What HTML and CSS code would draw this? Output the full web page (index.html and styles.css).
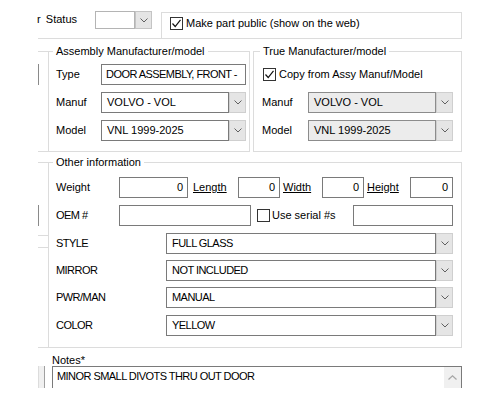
FILE: index.html
```html
<!DOCTYPE html>
<html>
<head>
<meta charset="utf-8">
<link rel="stylesheet" href="styles.css">
</head>
<body>
<div class="form">
  <div class="toprow">
    <div class="status">
      <span class="statuslabel"><span class="clip">er Status</span></span>
      <div class="combo small">
        <div class="field"></div>
        <div class="btn"><svg width="8" height="5" viewBox="0 0 8 5"><path d="M0.5 0.5 L4 4 L7.5 0.5" fill="none" stroke="#606060" stroke-width="1"/></svg></div>
      </div>
    </div>
    <div class="publicbox">
      <span class="check"><svg width="11" height="11" viewBox="0 0 11 11"><path d="M1.5 5.5 L4.2 8.5 L9.5 1.8" fill="none" stroke="#111" stroke-width="1.2"/></svg></span>
      <span class="checktext">Make part public (show on the web)</span>
    </div>
  </div>

  <div class="mfrrow">
    <div class="gutter g1"><div class="vl"></div></div>
    <div class="group asm">
      <div class="legend">Assembly Manufacturer/model</div>
      <div class="frow">
        <span class="lbl">Type</span>
        <div class="textbox w145 caps">DOOR ASSEMBLY, FRONT -</div>
      </div>
      <div class="frow">
        <span class="lbl">Manuf</span>
        <div class="combo w145">
          <div class="field">VOLVO - VOL</div>
          <div class="btn"><svg width="8" height="5" viewBox="0 0 8 5"><path d="M0.5 0.5 L4 4 L7.5 0.5" fill="none" stroke="#606060" stroke-width="1"/></svg></div>
        </div>
      </div>
      <div class="frow">
        <span class="lbl">Model</span>
        <div class="combo w145">
          <div class="field">VNL 1999-2025</div>
          <div class="btn"><svg width="8" height="5" viewBox="0 0 8 5"><path d="M0.5 0.5 L4 4 L7.5 0.5" fill="none" stroke="#606060" stroke-width="1"/></svg></div>
        </div>
      </div>
    </div>
    <div class="group tru">
      <div class="legend">True Manufacturer/model</div>
      <div class="frow">
        <span class="check ml1"><svg width="11" height="11" viewBox="0 0 11 11"><path d="M1.5 5.5 L4.2 8.5 L9.5 1.8" fill="none" stroke="#111" stroke-width="1.2"/></svg></span>
        <span class="checktext">Copy from Assy Manuf/Model</span>
      </div>
      <div class="frow">
        <span class="lbl">Manuf</span>
        <div class="combo w145 disabled">
          <div class="field">VOLVO - VOL</div>
          <div class="btn"><svg width="8" height="5" viewBox="0 0 8 5"><path d="M0.5 0.5 L4 4 L7.5 0.5" fill="none" stroke="#606060" stroke-width="1"/></svg></div>
        </div>
      </div>
      <div class="frow">
        <span class="lbl">Model</span>
        <div class="combo w145 disabled">
          <div class="field">VNL 1999-2025</div>
          <div class="btn"><svg width="8" height="5" viewBox="0 0 8 5"><path d="M0.5 0.5 L4 4 L7.5 0.5" fill="none" stroke="#606060" stroke-width="1"/></svg></div>
        </div>
      </div>
    </div>
  </div>

  <div class="otherrow">
    <div class="gutter g2"><div class="vl"></div><div class="hl"></div></div>
    <div class="group other">
      <div class="legend">Other information</div>
      <div class="frow">
        <span class="lbl w63">Weight</span>
        <div class="textbox num w69">0</div>
        <span class="ulbl lenl">Length</span>
        <div class="textbox num w42">0</div>
        <span class="ulbl widl">Width</span>
        <div class="textbox num w42">0</div>
        <span class="ulbl hgtl">Height</span>
        <div class="textbox num w43">0</div>
      </div>
      <div class="frow">
        <span class="lbl w63 caps">OEM #</span>
        <div class="textbox w132"></div>
        <span class="check ml6"></span>
        <span class="sertext">Use serial #s</span>
        <div class="textbox w100"></div>
      </div>
      <div class="frow">
        <span class="lbl w110 caps">STYLE</span>
        <div class="combo w287">
          <div class="field caps">FULL GLASS</div>
          <div class="btn"><svg width="8" height="5" viewBox="0 0 8 5"><path d="M0.5 0.5 L4 4 L7.5 0.5" fill="none" stroke="#606060" stroke-width="1"/></svg></div>
        </div>
      </div>
      <div class="frow tight">
        <span class="lbl w110 caps">MIRROR</span>
        <div class="combo w287">
          <div class="field caps">NOT INCLUDED</div>
          <div class="btn"><svg width="8" height="5" viewBox="0 0 8 5"><path d="M0.5 0.5 L4 4 L7.5 0.5" fill="none" stroke="#606060" stroke-width="1"/></svg></div>
        </div>
      </div>
      <div class="frow tight">
        <span class="lbl w110 caps">PWR/MAN</span>
        <div class="combo w287">
          <div class="field caps">MANUAL</div>
          <div class="btn"><svg width="8" height="5" viewBox="0 0 8 5"><path d="M0.5 0.5 L4 4 L7.5 0.5" fill="none" stroke="#606060" stroke-width="1"/></svg></div>
        </div>
      </div>
      <div class="frow">
        <span class="lbl w110 caps">COLOR</span>
        <div class="combo w287">
          <div class="field caps">YELLOW</div>
          <div class="btn"><svg width="8" height="5" viewBox="0 0 8 5"><path d="M0.5 0.5 L4 4 L7.5 0.5" fill="none" stroke="#606060" stroke-width="1"/></svg></div>
        </div>
      </div>
    </div>
  </div>

  <div class="noteslbl">Notes*</div>
  <div class="notesrow">
    <div class="g3"></div>
    <div class="notes">
      <div class="txt caps">MINOR SMALL DIVOTS THRU OUT DOOR</div>
      <div class="sb"><svg width="9" height="5" viewBox="0 0 9 5"><path d="M0.5 4.5 L4.5 0.8 L8.5 4.5" fill="none" stroke="#a6a6a6" stroke-width="1.2"/></svg></div>
    </div>
  </div>
</div>
</body>
</html>
```

FILE: styles.css
```css
* { box-sizing: border-box; }
html, body { margin: 0; padding: 0; background: #fff; }
body {
  font-family: "Liberation Sans", Arial, sans-serif;
  font-size: 11px;
  color: #000;
  width: 500px;
  height: 400px;
  overflow: hidden;
}
.form { margin-left: 38px; width: 424px; }
.caps { letter-spacing: -0.55px; }

/* top row */
.toprow { display: flex; height: 39px; border-bottom: 1px solid #dcdcdc; }
.status { display: flex; align-items: flex-start; width: 123px; flex: none; }
.statuslabel {
  width: 58px; margin-left: -1px; margin-top: 13px; line-height: 13px;
  overflow: hidden; white-space: nowrap; flex: none;
}
.statuslabel .clip { margin-left: -6px; word-spacing: 2px; }
.publicbox {
  flex: 1; margin-top: 12px;
  border: 1px solid #dcdcdc; border-bottom: none;
  display: flex; align-self: stretch; align-items: flex-start;
  padding: 4px 0 0 8px;
}

/* checkbox */
.check {
  width: 13px; height: 13px; border: 1px solid #333; background: #fff;
  flex: none; display: flex; align-items: center; justify-content: center;
}
.checktext { margin-left: 3px; line-height: 13px; white-space: nowrap; }
.ml1 { margin-left: 1px; }
.ml6 { margin-left: 6px; }

/* combos and textboxes */
.combo { display: flex; height: 21px; flex: none; }
.combo .field {
  flex: 1; border: 1px solid #7a7a7a; background: #fff;
  padding-left: 5px; line-height: 19px; white-space: nowrap; overflow: hidden;
}
.combo .btn {
  width: 17px; flex: none; background: #e5e5e5; border: 1px solid #cfcfcf;
  display: flex; align-items: center; justify-content: center;
}
.combo.small { width: 57px; height: 18px; margin-top: 11px; }
.combo.small .field { border-color: #b4b4b4; }
.combo.small .btn { border-color: #c4c4c4; }
.combo.disabled .field { background: #ececec; border-color: #8c8c8c; }

.textbox {
  flex: none; height: 21px; border: 1px solid #7a7a7a; background: #fff;
  line-height: 19px; padding: 0 4px; white-space: nowrap; overflow: hidden;
}
.num { text-align: right; }
.w145 { width: 145px; }
.w69 { width: 69px; }
.w42 { width: 42px; }
.w43 { width: 43px; }
.w132 { width: 132px; }
.w100 { width: 100px; }
.w287 { width: 287px; }

/* group boxes */
.gutter {
  width: 10px; flex: none;
  border-top: 1px solid #dcdcdc; border-bottom: 1px solid #dcdcdc;
}
.vl { border-left: 1px solid #8a8a8a; height: 21px; }
.g1 .vl { margin-top: 12px; }
.g2 .vl { margin-top: 42px; }
.g2 .hl {
  margin-top: 9px; height: 13px;
  border-top: 1px solid #dcdcdc; border-bottom: 1px solid #dcdcdc;
}
.group { border: 1px solid #dcdcdc; flex: none; }
.legend {
  display: table; background: #fff; margin-top: -7px;
  line-height: 13px; padding: 0 3px; white-space: nowrap;
}
.frow { display: flex; align-items: center; height: 21px; margin-top: 7px; }
.legend + .frow { margin-top: 6px; }
.frow.tight { margin-top: 6px; }
.lbl { flex: none; line-height: 13px; white-space: nowrap; }

.mfrrow { display: flex; margin-top: 12px; height: 101px; }
.asm { width: 202px; height: 101px; padding-left: 7px; }
.asm .legend { margin-left: -3px; }
.asm .lbl { width: 45px; }
.tru { width: 209px; height: 101px; margin-left: 3px; padding-left: 8px; }
.tru .legend { margin-left: -2px; }
.tru .lbl { width: 46px; }

.otherrow { display: flex; margin-top: 10px; height: 186px; }
.other { width: 414px; height: 186px; padding-left: 7px; }
.other .legend { margin-left: -3px; }
.other .legend + .frow { margin-top: 8px; }
.w63 { width: 63px; }
.w110 { width: 110px; }
.ulbl { flex: none; text-decoration: underline; line-height: 13px; white-space: nowrap; }
.lenl { margin-left: 5px; width: 45px; }
.widl { margin-left: 3px; width: 39px; }
.hgtl { margin-left: 3px; width: 43px; }
.sertext { flex: none; width: 81px; margin-left: 2px; line-height: 13px; white-space: nowrap; }

/* notes */
.noteslbl { margin-left: 14px; margin-top: 6px; line-height: 12px; }
.notesrow { display: flex; height: 22px; }
.g3 {
  width: 7px; flex: none; margin-right: 7px;
  border-left: 1px solid #dcdcdc; border-right: 1px solid #a0a0a0; background: #f0f0f0;
}
.notes {
  width: 410px; flex: none; display: flex;
  border: 1px solid #7a7a7a; border-bottom: none;
}
.notes .txt { flex: 1; padding: 3px 0 0 4px; line-height: 13px; white-space: nowrap; }
.notes .sb {
  width: 17px; flex: none; background: #f0f0f0;
  display: flex; justify-content: center; align-items: flex-start; padding-top: 8px;
}
```
